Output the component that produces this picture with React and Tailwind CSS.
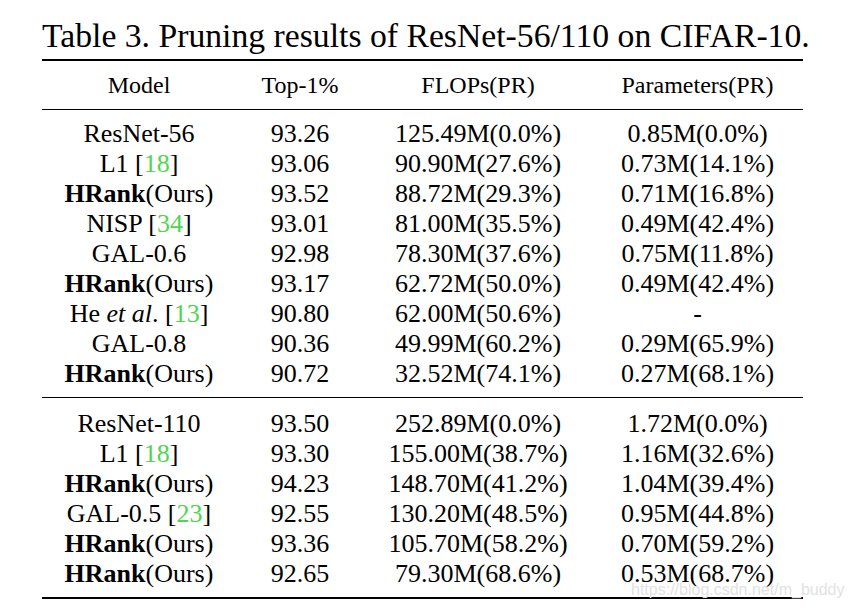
import React from 'react';

const G = ({ children }) => <span className="text-[#4fd64f]">{children}</span>;
const HR = () => (
  <>
    <b className="font-bold">HRank</b>(Ours)
  </>
);

const top = [
  ['ResNet-56', '93.26', '125.49M(0.0%)', '0.85M(0.0%)'],
  [<>L1 [<G>18</G>]</>, '93.06', '90.90M(27.6%)', '0.73M(14.1%)'],
  [<HR />, '93.52', '88.72M(29.3%)', '0.71M(16.8%)'],
  [<>NISP [<G>34</G>]</>, '93.01', '81.00M(35.5%)', '0.49M(42.4%)'],
  ['GAL-0.6', '92.98', '78.30M(37.6%)', '0.75M(11.8%)'],
  [<HR />, '93.17', '62.72M(50.0%)', '0.49M(42.4%)'],
  [<>He <i>et al</i>. [<G>13</G>]</>, '90.80', '62.00M(50.6%)', '-'],
  ['GAL-0.8', '90.36', '49.99M(60.2%)', '0.29M(65.9%)'],
  [<HR />, '90.72', '32.52M(74.1%)', '0.27M(68.1%)'],
];

const bottom = [
  ['ResNet-110', '93.50', '252.89M(0.0%)', '1.72M(0.0%)'],
  [<>L1 [<G>18</G>]</>, '93.30', '155.00M(38.7%)', '1.16M(32.6%)'],
  [<HR />, '94.23', '148.70M(41.2%)', '1.04M(39.4%)'],
  [<>GAL-0.5 [<G>23</G>]</>, '92.55', '130.20M(48.5%)', '0.95M(44.8%)'],
  [<HR />, '93.36', '105.70M(58.2%)', '0.70M(59.2%)'],
  [<HR />, '92.65', '79.30M(68.6%)', '0.53M(68.7%)'],
];

const cols = 'grid grid-cols-[194px_128px_228px_211px]';

function Row({ r }) {
  return (
    <div className={`${cols} h-[30px] items-center text-center`}>
      {r.map((c, i) => (
        <div key={i} className="whitespace-nowrap">{c}</div>
      ))}
    </div>
  );
}

export default function App() {
  return (
    <div className="w-[850px] h-[608px] bg-white text-black relative overflow-hidden font-['Liberation_Serif',serif]">
      <div className="pl-[42px] w-[803px]">
        <div className="h-[59px] pt-[16px] text-[33.7px] leading-[40px] whitespace-nowrap">
          Table 3. Pruning results of ResNet-56/110 on CIFAR-10.
        </div>
        <div className="h-[2px] bg-black" />
        <div className={`${cols} h-[48px] items-center text-center text-[24px]`}>
          <div>Model</div>
          <div>Top-1%</div>
          <div>FLOPs(PR)</div>
          <div>Parameters(PR)</div>
        </div>
        <div className="h-px bg-black" />
        <div className="pt-[9px] text-[26px] leading-[30px]">
          {top.map((r, i) => (
            <Row key={i} r={r} />
          ))}
        </div>
        <div className="mt-[8px] h-px bg-black" />
        <div className="pt-[11px] text-[26px] leading-[30px]">
          {bottom.map((r, i) => (
            <Row key={i} r={r} />
          ))}
        </div>
        <div className="mt-[8px] h-[2px] bg-black" />
      </div>
      <div className="absolute left-[631px] top-[581px] text-[16px] leading-[18px] text-[#e2e2e2] font-['Liberation_Sans',sans-serif]">
        https://blog.csdn.net/m_buddy
      </div>
    </div>
  );
}
